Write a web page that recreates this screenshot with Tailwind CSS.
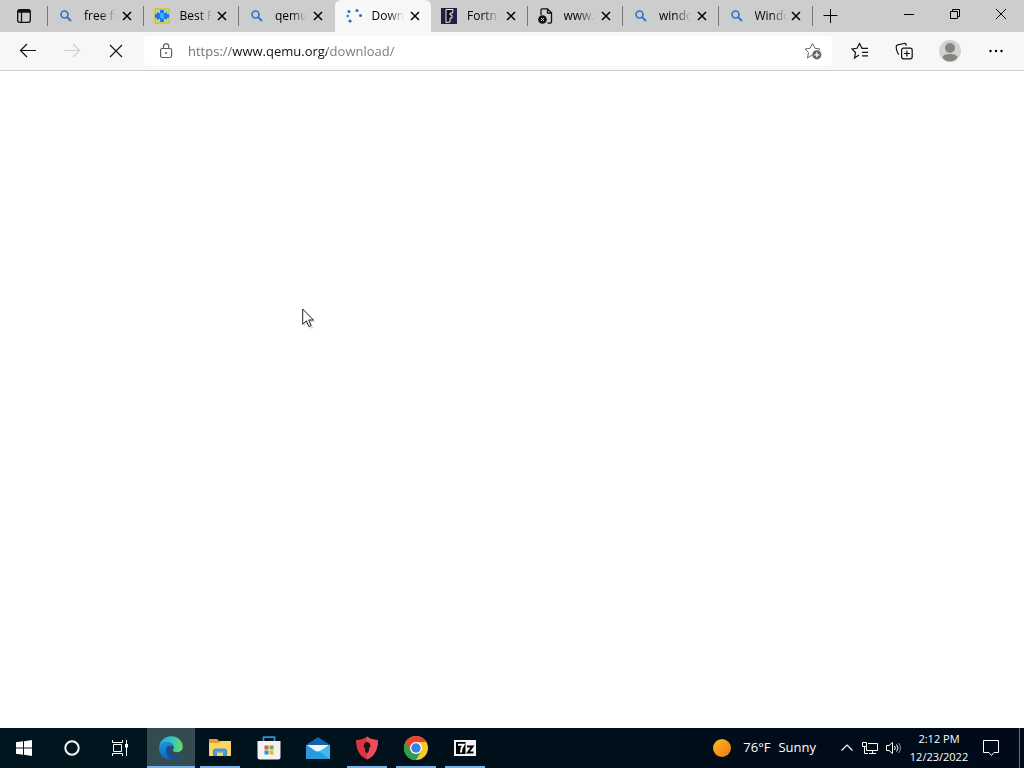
<!DOCTYPE html>
<html lang="en">
<head>
<meta charset="utf-8">
<meta name="viewport" content="width=device-width, initial-scale=1">
<title>Download - QEMU</title>
<script src="https://cdn.jsdelivr.net/npm/@tailwindcss/browser@4"></script>
</head>
<body class="flex h-screen flex-col overflow-hidden bg-white font-['Open_Sans','Noto_Sans',sans-serif] text-xs text-black">
<svg class="hidden" aria-hidden="true">
  <symbol id="close" viewBox="0 0 10 10"><path d="M1 1l8 8M9 1l-8 8" fill="none" stroke="#000" stroke-width="1.500"/></symbol>
  <symbol id="search" viewBox="0 0 16 16"><circle cx="6.500" cy="6.500" r="3.500" fill="none" stroke="#2b77d0" stroke-width="1.700"/><path d="M9 9l4 4" stroke="#2b77d0" stroke-width="2"/></symbol>
</svg>

<header class="flex h-8 shrink-0 bg-[#cdcdcd]">
  <button class="flex w-[47px] shrink-0 items-center justify-center" aria-label="Tab actions">
    <svg class="size-4" viewBox="0 0 16 16" fill="none" stroke="#111" stroke-width="1.300"><rect x="1.700" y="1.700" width="12.600" height="12.600" rx="2"/><path d="M2 3.200h12" stroke-width="3"/><path d="M5.500 4v10"/></svg>
  </button>
  <nav class="flex min-w-0 flex-[0_1_766px]" aria-label="Tabs">
    <div class="flex min-w-0 flex-1 items-center">
      <span class="h-5 w-px shrink-0 bg-[#777]"></span>
      <a href="#" class="ml-2.5 flex min-w-0 flex-1 items-center gap-2.5">
        <svg class="size-4 shrink-0"><use href="#search"/></svg>
        <span class="w-8 overflow-hidden whitespace-nowrap [mask-image:linear-gradient(90deg,#000_50%,transparent)]">free fonts</span>
      </a>
      <button class="mr-2.5 flex size-3 shrink-0 items-center justify-center" aria-label="Close tab"><svg class="size-2.5"><use href="#close"/></svg></button>
    </div>
    <div class="flex min-w-0 flex-1 items-center">
      <span class="h-5 w-px shrink-0 bg-[#777]"></span>
      <a href="#" class="ml-2.5 flex min-w-0 flex-1 items-center gap-2.5">
        <svg class="size-4 shrink-0" viewBox="0 0 16 16"><rect width="16" height="16" rx="1" fill="#d2c64c"/><path d="M2 2h12v12H2z" fill="#bcd2b4"/><path d="M6 2h4v3h2V4h1v2h2v4h-2v2h-1v-1h-2v3H6v-3H4v1H3v-2H1V6h2V4h1v1h2z" fill="#167cf2"/><path d="M7 5v5M9 5v6" stroke="#7bd4fa"/></svg>
        <span class="w-8 overflow-hidden whitespace-nowrap [mask-image:linear-gradient(90deg,#000_60%,transparent)]">Best Free</span>
      </a>
      <button class="mr-2.5 flex size-3 shrink-0 items-center justify-center" aria-label="Close tab"><svg class="size-2.5"><use href="#close"/></svg></button>
    </div>
    <div class="flex min-w-0 flex-1 items-center">
      <span class="h-5 w-px shrink-0 bg-[#777]"></span>
      <a href="#" class="ml-2.5 flex min-w-0 flex-1 items-center gap-2.5">
        <svg class="size-4 shrink-0"><use href="#search"/></svg>
        <span class="w-8 overflow-hidden whitespace-nowrap [mask-image:linear-gradient(90deg,#000_50%,transparent)]">qemu</span>
      </a>
      <button class="mr-2.5 flex size-3 shrink-0 items-center justify-center" aria-label="Close tab"><svg class="size-2.5"><use href="#close"/></svg></button>
    </div>
    <div class="ml-px flex min-w-0 flex-1 items-center rounded-t-md bg-[#f7f7f7] pl-px">
      <a href="#" aria-current="page" class="ml-2.5 flex min-w-0 flex-1 items-center gap-2.5">
        <svg class="size-4 shrink-0" viewBox="0 0 16 16" fill="#2e6cab"><circle cx="3" cy="3.500" r="1.500"/><circle cx="1.700" cy="8" r="1.200"/><circle cx="4" cy="13" r="1.600"/><circle cx="11" cy="2.500" r="1.500"/><circle cx="14.500" cy="7.500" r="1.500"/></svg>
        <span class="w-8 overflow-hidden whitespace-nowrap [mask-image:linear-gradient(90deg,#000_50%,transparent)]">Download</span>
      </a>
      <button class="mr-2.5 flex size-3 shrink-0 items-center justify-center" aria-label="Close tab"><svg class="size-2.5"><use href="#close"/></svg></button>
    </div>
    <div class="flex min-w-0 flex-1 items-center">
      <a href="#" class="ml-2.5 flex min-w-0 flex-1 items-center gap-2.5">
        <svg class="size-4 shrink-0" viewBox="0 0 16 16"><path d="M0 0h16v16H0z" fill="#2b1b49"/><path d="M5 1.500h7l-.5 3.500H9v2h2v3H9v4l-4 .5z" fill="#111" stroke="#eee"/></svg>
        <span class="w-8 overflow-hidden whitespace-nowrap [mask-image:linear-gradient(90deg,#000_50%,transparent)]">Fortnite</span>
      </a>
      <button class="mr-2.5 flex size-3 shrink-0 items-center justify-center" aria-label="Close tab"><svg class="size-2.5"><use href="#close"/></svg></button>
    </div>
    <div class="flex min-w-0 flex-1 items-center">
      <span class="h-5 w-px shrink-0 bg-[#777]"></span>
      <a href="#" class="ml-2.5 flex min-w-0 flex-1 items-center gap-2.5">
        <svg class="size-4 shrink-0" viewBox="0 0 16 16" fill="none" stroke="#111" stroke-width="1.300"><path d="M3 7V2.200C3 1.300 3.500.8 4.300.8H9.500l4 4v9c0 .8-.5 1.400-1.300 1.400H9.500M9.500 1v4h4"/><circle cx="4.500" cy="11.500" r="4.300" fill="#111" stroke="none"/><path d="M3 10l3 3M6 10l-3 3" stroke="#ddd" stroke-width="1"/></svg>
        <span class="w-8 overflow-hidden whitespace-nowrap [mask-image:linear-gradient(90deg,#000_40%,transparent)]">www.q</span>
      </a>
      <button class="mr-2.5 flex size-3 shrink-0 items-center justify-center" aria-label="Close tab"><svg class="size-2.5"><use href="#close"/></svg></button>
    </div>
    <div class="flex min-w-0 flex-1 items-center">
      <span class="h-5 w-px shrink-0 bg-[#777]"></span>
      <a href="#" class="ml-2.5 flex min-w-0 flex-1 items-center gap-2.5">
        <svg class="size-4 shrink-0"><use href="#search"/></svg>
        <span class="w-8 overflow-hidden whitespace-nowrap [mask-image:linear-gradient(90deg,#000_50%,transparent)]">windows</span>
      </a>
      <button class="mr-2.5 flex size-3 shrink-0 items-center justify-center" aria-label="Close tab"><svg class="size-2.5"><use href="#close"/></svg></button>
    </div>
    <div class="flex min-w-0 flex-1 items-center">
      <span class="h-5 w-px shrink-0 bg-[#777]"></span>
      <a href="#" class="ml-2.5 flex min-w-0 flex-1 items-center gap-2.5">
        <svg class="size-4 shrink-0"><use href="#search"/></svg>
        <span class="w-8 overflow-hidden whitespace-nowrap [mask-image:linear-gradient(90deg,#000_50%,transparent)]">Windows</span>
      </a>
      <button class="mr-2.5 flex size-3 shrink-0 items-center justify-center" aria-label="Close tab"><svg class="size-2.5"><use href="#close"/></svg></button>
      <span class="h-5 w-px shrink-0 bg-[#777]"></span>
    </div>
  </nav>
  <button class="flex w-9 shrink-0 items-center justify-center" aria-label="New tab">
    <svg class="size-4" viewBox="0 0 16 16" stroke="#000"><path d="M7.500 1v14M.5 7.500h14"/></svg>
  </button>
  <div class="ml-auto flex shrink-0 items-center pb-1">
    <button class="flex w-[46px] justify-center" aria-label="Minimize"><svg class="size-3" viewBox="0 0 12 12" stroke="#000"><path d="M1 6.500h10"/></svg></button>
    <button class="flex w-[46px] justify-center" aria-label="Restore"><svg class="size-3" viewBox="0 0 12 12" fill="none" stroke="#000"><path d="M1.500 3.500h7v7h-7zM3.500 3.500v-2h7v7h-2"/></svg></button>
    <button class="flex w-[46px] justify-center" aria-label="Close window"><svg class="size-3" viewBox="0 0 12 12" stroke="#000"><path d="M1 1l10 10M11 1L1 11"/></svg></button>
  </div>
</header>

<div class="flex h-[39px] shrink-0 items-center border-b border-[#cfcfcf] bg-[#f7f7f7] pl-1.5">
  <button class="flex w-11 shrink-0 justify-center" aria-label="Back"><svg class="h-4 w-[18px]" viewBox="0 0 18 16" fill="none" stroke="#111" stroke-width="1.200"><path d="M17 7.500H1.500M8 1L1.500 7.500 8 14"/></svg></button>
  <button class="flex w-11 shrink-0 justify-center" aria-label="Forward" disabled><svg class="h-4 w-[18px]" viewBox="0 0 18 16" fill="none" stroke="#d0d0d0" stroke-width="1.200"><path d="M1 7.500h15.500M10 1l6.500 6.500L10 14"/></svg></button>
  <button class="flex w-11 shrink-0 justify-center" aria-label="Stop loading"><svg class="size-3.5" viewBox="0 0 14 14" stroke="#111" stroke-width="1.100"><path d="M1 1l12 12M13 1L1 13"/></svg></button>
  <div class="ml-1.5 flex h-[30px] min-w-0 flex-1 items-center rounded-sm bg-white pr-2.5 pl-3.5">
    <svg class="h-4 w-4 shrink-0" viewBox="0 0 16 16" fill="none" stroke="#606060" stroke-width="1.200"><rect x="2.600" y="5.500" width="11" height="9" rx="1.500"/><path d="M5.500 5.500V3.300a2.600 2.600 0 015.200 0v2.200"/><circle cx="8" cy="10" r="1" fill="#606060" stroke="none"/></svg>
    <input type="text" aria-label="Address" spellcheck="false" value="https://www.qemu.org/download/" class="ml-3.5 min-w-0 flex-1 bg-[linear-gradient(90deg,#6b6b6b_44px,#111_44px,#111_139px,#767676_139px)] bg-clip-text text-[13px] leading-5 text-transparent outline-none">
    <button class="shrink-0" aria-label="Add to favorites"><svg class="size-[18px]" viewBox="0 0 18 18" fill="none" stroke="#666"><path d="M8 13l-4.500 3 1-5.500L1 7l5-.7L8.500 1.500 11 6.300l5 .7-1.500 1.500"/><circle cx="12.800" cy="12.800" r="4.600" fill="#666" stroke="none"/><path d="M12.800 10.300v5M10.300 12.800h5" stroke="#fff" stroke-width="1.200"/></svg></button>
  </div>
  <div class="flex shrink-0 items-center pl-1.5">
    <button class="flex w-11 justify-center" aria-label="Favorites"><svg class="h-[18px] w-[18px]" viewBox="0 0 18 18" fill="none" stroke="#111" stroke-width="1.200"><path d="M8 13l-4.500 3 1-5.500L1 7l5-.7 2.500-4.800L11 6.300h6M11 10.300h6M11 13.800h6"/></svg></button>
    <button class="flex w-11 justify-center" aria-label="Collections"><svg class="size-[18px]" viewBox="0 0 18 18" fill="none" stroke="#111" stroke-width="1.200"><path d="M4 12.500C2.500 11.800 1.300 7.500 1.200 4.800 1.100 3.700 1.800 3 2.800 2.800L9 1.500c1.200-.2 2 .3 2.500 2"/><rect x="6.600" y="6.200" width="10.600" height="10.600" rx="2"/><path d="M11.900 8.500v6M8.900 11.500h6"/></svg></button>
    <button class="flex w-12 justify-center" aria-label="Profile"><svg class="size-[22px]" viewBox="0 0 22 22"><circle cx="11" cy="11" r="11" fill="#d2d2ce"/><circle cx="11" cy="8" r="5" fill="#858583"/><path d="M3.500 17.500c1-3 4-3.500 7.500-3.500s6.500.5 7.500 3.500C16.500 20 14 21.500 11 21.500S5.500 20 3.500 17.500z" fill="#858583"/></svg></button>
    <button class="mr-1.5 flex w-11 justify-center" aria-label="Settings and more"><svg class="h-4 w-4" viewBox="0 0 16 16"><circle cx="2.500" cy="8" r="1.200"/><circle cx="8" cy="8" r="1.200"/><circle cx="13.500" cy="8" r="1.200"/></svg></button>
  </div>
</div>

<main class="relative min-h-0 flex-1 bg-white">
  <svg class="absolute top-[237px] left-[302px] h-[22px] w-[15px]" viewBox="0 0 15 22"><path d="M2 3v15l3.500-3 3 6 3-1.500-3-5.500H14z" fill="#ddd"/><path d="M.7 1v15.300l3.600-3.500 2.500 5.700 2.300-1-2.500-5.500h4.800z" fill="#fff" stroke="#222"/></svg>
</main>

<footer class="flex h-10 shrink-0 items-stretch bg-linear-to-r from-[#00161e] to-[#000a18] text-white">
  <button class="flex w-12 items-center justify-center" aria-label="Start"><svg class="size-4" viewBox="0 0 16 16" fill="#fff"><path d="M0 2.300L7 1.300v6.300H0zM8 1.200L16 0v7.600H8zM0 8.500h7v6.200l-7-1zM8 8.500h8V16l-8-1.200z"/></svg></button>
  <button class="flex w-12 items-center justify-center" aria-label="Cortana"><svg class="size-4" viewBox="0 0 16 16" fill="none" stroke="#f4f8fa" stroke-width="2"><circle cx="8" cy="8" r="6.700"/></svg></button>
  <button class="mr-[3px] flex w-12 items-center justify-center" aria-label="Task view"><svg class="size-4" viewBox="0 0 16 16" fill="none" stroke="#fff"><path d="M.5 0v2.500h10V0M1.500 4.500h8v7h-8zM.5 16v-2.500h10V16M14.500 0v16"/><path d="M13 4h3v3.500h-3z" fill="#fff" stroke="none"/></svg></button>
  <button class="flex w-12 items-center justify-center border-b-2 border-[#76b3e8] bg-[#344b51] pt-0.5" aria-label="Microsoft Edge">
    <svg class="size-6" viewBox="0 0 24 24"><defs><linearGradient id="eg" x1="0" x2="1"><stop stop-color="#26a8e4"/><stop offset=".55" stop-color="#31c7c3"/><stop offset="1" stop-color="#6edc58"/></linearGradient><linearGradient id="eb" x1="0" y1="0" x2=".5" y2="1"><stop stop-color="#1e9be4"/><stop offset="1" stop-color="#0a5fb4"/></linearGradient></defs><path d="M.2 11C.8 4.600 6 .2 12 .2c7 0 11.800 5 11.800 10.300 0 3.700-2.600 5.700-5.800 5.700-2.700 0-4.200-1-4.200-1.900 0-.8 1-1.100 1-2.800C14.800 8.500 11.500 6 8 6 4.500 6 1.500 8 .2 11z" fill="url(#eg)"/><path d="M.2 11C1.200 8 4.500 6 8 6c3.800 0 6.600 2.400 6.700 5-.8-1.300-2.400-1.500-3.500-.5C7.500 14 10 21 16.500 21c2 0 3.600-.7 4.700-1.500C19 22.500 15.700 24 12 24 4.600 24-.5 18 .2 11z" fill="url(#eb)"/><path d="M8.500 10.300C5.500 15 8 22 13 23.900c4 0 7.200-2 9.200-5.200-7 3.800-14-1.700-11-8.200-1-.7-1.900-.7-2.700-.2z" fill="#174e91"/></svg>
  </button>
  <button class="mx-[5px] flex w-10 items-center justify-center border-b-2 border-[#76b3e8] pt-0.5" aria-label="File Explorer">
    <svg class="h-5 w-[22px]" viewBox="0 0 22 20"><path d="M0 1h8l2 2h11v15H0z" fill="#e4a02d"/><path d="M0 5h10l2-2h10v15H0z" fill="#fad565"/><path d="M4 18v-6l2-1.500h10l2 1.500v6h-4v-3.500H8V18z" fill="#4697cc"/><path d="M6 14h10" stroke="#79b6d7"/></svg>
  </button>
  <button class="flex w-12 items-center justify-center" aria-label="Microsoft Store">
    <svg class="size-6" viewBox="0 0 24 24"><path d="M6.500 6V1.200h11V6" fill="none" stroke="#348fcb" stroke-width="1.800"/><path d="M.5 5h23v16a2.500 2.500 0 01-2.500 2.500H3A2.500 2.500 0 01.5 21z" fill="#f2f2f1"/><path d="M7.500 9.500h4v4h-4z" fill="#e45a32"/><path d="M12.500 9.500h4v4h-4z" fill="#71b52d"/><path d="M7.500 14.500h4v4h-4z" fill="#2499d5"/><path d="M12.500 14.500h4v4h-4z" fill="#f0b32e"/></svg>
  </button>
  <button class="mr-[5px] ml-px flex w-12 items-center justify-center" aria-label="Mail">
    <svg class="size-6" viewBox="0 0 24 24"><path d="M0 9L12 1l12 8v3H0z" fill="#1264aa"/><path d="M1 9h22L12 18z" fill="#edf5f9"/><path d="M0 9l12 7.500V23H0z" fill="#2b98df"/><path d="M24 9v14H0z" fill="#42b8ed"/><path d="M24 23H0l12-8z" fill="#249cdf"/></svg>
  </button>
  <button class="flex w-10 items-center justify-center border-b-2 border-[#76b3e8] pt-0.5" aria-label="Security shield">
    <svg class="size-6" viewBox="0 0 24 24"><path d="M12 .5c3.500 2.700 7 3.300 11 3.500 0 9-3 16-11 19.500C4 20 1 13 1 4c4-.2 7.500-.8 11-3.500z" fill="#d93543"/><path d="M12 .5c3.500 2.700 7 3.300 11 3.500 0 9-3 16-11 19.500z" fill="#ed4d58"/><path d="M12 6a3.500 3.500 0 00-2 6.300V15l2 2.500 2-2.500v-2.700A3.500 3.500 0 0012 6z" fill="#161719"/></svg>
  </button>
  <button class="mx-[9px] flex w-10 items-center justify-center border-b-2 border-[#76b3e8] pt-0.5" aria-label="Google Chrome">
    <svg class="size-6" viewBox="0 0 24 24"><circle cx="12" cy="12" r="12" fill="#fbc927"/><path d="M1.600 6A12 12 0 0122.400 6H12L7 15z" fill="#e94335"/><path d="M1.600 6A12 12 0 0012 24l5.200-9L7 15z" fill="#2b9f4b"/><circle cx="12" cy="12" r="6" fill="#fff"/><circle cx="12" cy="12" r="4.700" fill="#377fea"/></svg>
  </button>
  <button class="flex w-10 items-center justify-center border-b-2 border-[#76b3e8] pt-0.5" aria-label="7-Zip">
    <svg class="h-4 w-[22px]" viewBox="0 0 22 16"><path d="M0 0h22v16H0z" fill="#f5f5f5"/><path d="M2 2h9.500v12H2z" fill="#000"/><path d="M4 4.700h5.500C7.500 7.500 7 9.500 7 12.500" stroke="#fff" stroke-width="2" fill="none"/><path d="M13 6.500h5.500L14 12.500h5.500" fill="none" stroke="#000" stroke-width="2"/></svg>
  </button>
  <div class="ml-auto flex items-center">
    <button class="flex items-center gap-3 pr-6 text-[13px] whitespace-nowrap"><svg class="size-[18px]" viewBox="0 0 18 18"><defs><linearGradient id="sun" x1="0" x2="1" y1="0" y2="1"><stop stop-color="#ffb91f"/><stop offset="1" stop-color="#ec7718"/></linearGradient></defs><circle cx="9" cy="9" r="9" fill="url(#sun)"/></svg><span class="flex gap-2"><span>76°F</span><span>Sunny</span></span></button>
    <button class="flex w-3.5 justify-center" aria-label="Show hidden icons"><svg class="h-3 w-3" viewBox="0 0 12 12" fill="none" stroke="#fff" stroke-width="1.200"><path d="M.5 8.500L6 3l5.500 5.500"/></svg></button>
    <button class="ml-2 flex w-4 justify-center" aria-label="Network"><svg class="size-4" viewBox="0 0 16 16" fill="none" stroke="#fff"><path d="M6 3.500h9.500v7h-11V7M10.500 10.500v3M7 13.500h7M.5 2.500h4v4h-4zM2.500 6.500v7H6"/></svg></button>
    <button class="ml-2 flex w-4 justify-center" aria-label="Volume"><svg class="size-4" viewBox="0 0 16 16" fill="none" stroke="#fff"><path d="M.5 5.500h2.500l3.500-3v11L3 10.500H.5zM8.500 6q1.500 2 0 4M10.500 4.500q3 3.500 0 7"/><path d="M12.500 3q4 5 0 10" stroke="#8d949b"/></svg></button>
    <button class="mr-[3px] ml-1.5 flex w-[62px] flex-col items-center text-[11px] leading-[18px] whitespace-nowrap"><span>2:12 PM</span><span>12/23/2022</span></button>
    <button class="flex w-9 justify-center" aria-label="Notifications"><svg class="size-4" viewBox="0 0 16 16" fill="none" stroke="#fff"><path d="M.5.500h15v12H11l-2.500 3-2.500-3H.5z"/></svg></button>
    <button class="ml-2.5 h-10 w-[5px] border-l border-[#69727b]" aria-label="Show desktop"></button>
  </div>
</footer>
</body>
</html>
